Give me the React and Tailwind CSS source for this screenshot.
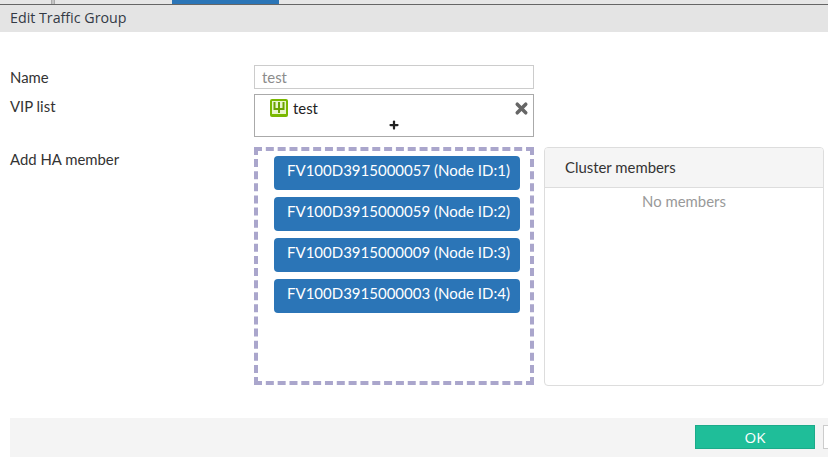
import React from 'react';
import { X, Plus } from 'lucide-react';

const lato = 'font-["Lato","Open_Sans",sans-serif]';

const members = [
  'FV100D3915000057 (Node ID:1)',
  'FV100D3915000059 (Node ID:2)',
  'FV100D3915000009 (Node ID:3)',
  'FV100D3915000003 (Node ID:4)',
];

const VipIcon = () => (
  <svg width="18" height="18" viewBox="0 0 18 18" className="shrink-0">
    <rect width="18" height="18" rx="2" fill="#7ab800" />
    <rect x="2" y="2" width="14" height="13" fill="#e8f5cc" />
    <path d="M4.5 3v7h9V3M9 3v11" fill="none" stroke="#6ba300" strokeWidth="2" />
  </svg>
);

export default function App() {
  return (
    <div className={`w-[828px] h-[457px] overflow-hidden bg-white flex flex-col ${lato}`}>
      <div className="h-[4px] flex bg-[#e6e6e6] pl-[51px]">
        <div className="w-[4px] bg-[#c4c4c4] border-x border-[#aaaaaa]" />
        <div className="w-[117px]" />
        <div className="w-[107px] bg-[#2b75b7]" />
      </div>
      <div className="h-[1px] bg-[#666666]" />
      <div className='h-[27px] bg-[#e4e4e4] pl-[10px] text-[14.25px] leading-[26px] text-[#333a44] font-["Open_Sans",sans-serif]'>
        Edit Traffic Group
      </div>

      <div className="flex-1 flex flex-col pl-[10px] pt-[33px] text-[14.9px] text-[#333333]">
        <div className="flex h-[24px]">
          <div className="w-[244px] leading-[24px]">Name</div>
          <div className="w-[280px] border border-[#cccccc] pl-[7px] text-[#8c8c8c] leading-[23px]">test</div>
        </div>

        <div className="flex mt-[5px] h-[43px]">
          <div className="w-[244px] leading-[24px]">VIP list</div>
          <div className="w-[280px] border border-[#aaaaaa] flex flex-col relative">
            <div className="flex items-center gap-[5px] pl-[15px] pt-[4px] leading-[18px] text-[#222222]">
              <VipIcon />
              <span>test</span>
            </div>
            <X size={17} strokeWidth={5} className="absolute right-[3px] top-[5px] text-[#666666]" />
            <div className="flex justify-center mt-[2px] pr-[1px]">
              <Plus size={12} strokeWidth={4.5} className="text-[#222222]" />
            </div>
          </div>
        </div>

        <div className="flex mt-[10px] h-[239px]">
          <div className="w-[244px] leading-[24px]">Add HA member</div>
          <div className="w-[280px] h-[238px] border-4 border-dashed border-[#aaa6cc] pt-[5px] pl-[16px] flex flex-col gap-[7px]">
            {members.map((m) => (
              <div
                key={m}
                className="w-[246px] h-[34px] rounded-[4px] bg-[#2b75b7] text-white text-[15px] leading-[28px] pl-[13px] whitespace-nowrap"
              >
                {m}
              </div>
            ))}
          </div>
          <div className="w-[280px] ml-[10px] border border-[#dddddd] rounded-[4px] overflow-hidden flex flex-col">
            <div className="h-[40px] shrink-0 bg-[#f5f5f5] border-b border-[#dddddd] pl-[20px] leading-[39px] text-[#333333]">
              Cluster members
            </div>
            <div className="text-center text-[#999999] leading-[26px]">No members</div>
          </div>
        </div>

        <div className="mt-[32px] h-[39px] bg-[#f4f4f4] flex items-start pt-[7px] pl-[685px] gap-[8px]">
          <div className='w-[120px] h-[24px] shrink-0 bg-[#1fbe99] border border-[#1cab8a] text-white text-center text-[15px] leading-[23px] font-["Open_Sans",sans-serif]'>
            OK
          </div>
          <div className="w-[40px] h-[24px] shrink-0 bg-white border border-[#cccccc]" />
        </div>
      </div>
    </div>
  );
}
